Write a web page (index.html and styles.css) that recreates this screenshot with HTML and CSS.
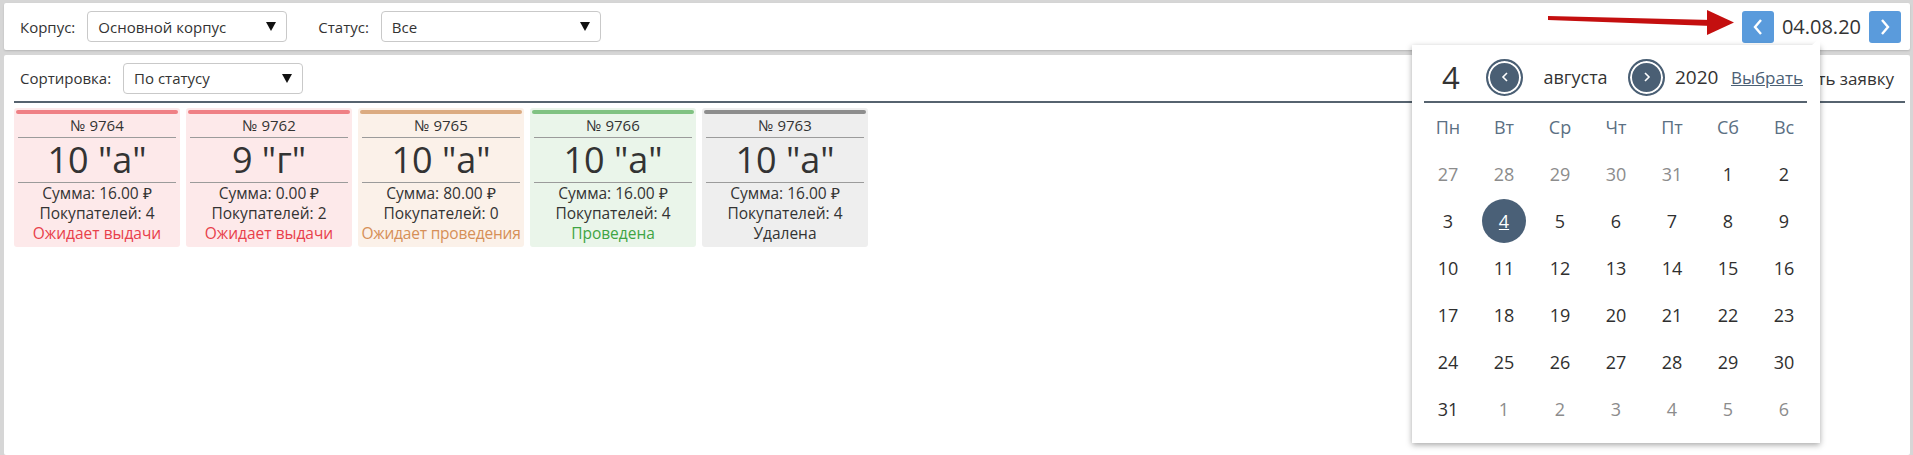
FILE: index.html
```html
<!DOCTYPE html>
<html lang="ru">

<head>
    <meta charset="UTF-8">
    <meta name="viewport" content="width=device-width, initial-scale=1.0">
    <title>Заявки</title>
    <link rel="stylesheet" href="styles.css">
</head>

<body>
    <div class="page">
        <div class="toolbar">
            <span class="label">Корпус:</span>
            <div class="select select-building">Основной корпус <span class="caret"></span></div>
            <span class="label">Статус:</span>
            <div class="select select-status">Все <span class="caret"></span></div>

            <div class="date-nav">
                <button class="nav-btn">
                    <svg width="12" height="18" viewBox="0 0 12 18"><polyline points="9,2 3,9 9,16" fill="none" stroke="#fff" stroke-width="2.4" /></svg>
                </button>
                <span class="date-text">04.08.20</span>
                <button class="nav-btn">
                    <svg width="12" height="18" viewBox="0 0 12 18"><polyline points="3,2 9,9 3,16" fill="none" stroke="#fff" stroke-width="2.4" /></svg>
                </button>
            </div>
        </div>

        <div class="panel">
            <div class="panel-head">
                <span class="label">Сортировка:</span>
                <div class="select select-sort">По статусу <span class="caret"></span></div>
                <a class="create-link">Создать заявку</a>
            </div>

            <div class="cards">
                <div class="card card-wait">
                    <div class="card-bar"></div>
                    <div class="card-num">№ 9764</div>
                    <div class="card-class">10 "а"</div>
                    <div class="card-info">Сумма: 16.00 ₽</div>
                    <div class="card-info">Покупателей: 4</div>
                    <div class="card-info card-status">Ожидает выдачи</div>
                </div>
                <div class="card card-wait">
                    <div class="card-bar"></div>
                    <div class="card-num">№ 9762</div>
                    <div class="card-class">9 "г"</div>
                    <div class="card-info">Сумма: 0.00 ₽</div>
                    <div class="card-info">Покупателей: 2</div>
                    <div class="card-info card-status">Ожидает выдачи</div>
                </div>
                <div class="card card-pending">
                    <div class="card-bar"></div>
                    <div class="card-num">№ 9765</div>
                    <div class="card-class">10 "а"</div>
                    <div class="card-info">Сумма: 80.00 ₽</div>
                    <div class="card-info">Покупателей: 0</div>
                    <div class="card-info card-status">Ожидает проведения</div>
                </div>
                <div class="card card-done">
                    <div class="card-bar"></div>
                    <div class="card-num">№ 9766</div>
                    <div class="card-class">10 "а"</div>
                    <div class="card-info">Сумма: 16.00 ₽</div>
                    <div class="card-info">Покупателей: 4</div>
                    <div class="card-info card-status">Проведена</div>
                </div>
                <div class="card card-deleted">
                    <div class="card-bar"></div>
                    <div class="card-num">№ 9763</div>
                    <div class="card-class">10 "а"</div>
                    <div class="card-info">Сумма: 16.00 ₽</div>
                    <div class="card-info">Покупателей: 4</div>
                    <div class="card-info card-status">Удалена</div>
                </div>
            </div>
        </div>
    </div>

    <!-- pointer arrow drawn over the toolbar -->
    <svg class="hint-arrow" width="200" height="34" viewBox="0 0 200 34">
        <polygon points="8,10 172,14 172,20 8,14" fill="#c40f0f" />
        <polygon points="167,4 194,16.5 167,29" fill="#c40f0f" />
    </svg>

    <div class="date-popup">
        <div class="popup-head">
            <span class="popup-day">4</span>
            <span class="round-btn">
                <svg width="10" height="12" viewBox="0 0 10 12"><polyline points="7,2 3,6 7,10" fill="none" stroke="#fff" stroke-width="1.6" /></svg>
            </span>
            <span class="popup-month">августа</span>
            <span class="round-btn">
                <svg width="10" height="12" viewBox="0 0 10 12"><polyline points="3,2 7,6 3,10" fill="none" stroke="#fff" stroke-width="1.6" /></svg>
            </span>
            <span class="popup-year">2020 <a class="pick-link">Выбрать</a></span>
        </div>
        <div class="cal-grid">
            <span class="wd">Пн</span><span class="wd">Вт</span><span class="wd">Ср</span><span class="wd">Чт</span><span class="wd">Пт</span><span class="wd">Сб</span><span class="wd">Вс</span>

            <span class="day other">27</span><span class="day other">28</span><span class="day other">29</span><span class="day other">30</span><span class="day other">31</span><span class="day">1</span><span class="day">2</span>
            <span class="day">3</span><span class="day selected"><b>4</b></span><span class="day">5</span><span class="day">6</span><span class="day">7</span><span class="day">8</span><span class="day">9</span>
            <span class="day">10</span><span class="day">11</span><span class="day">12</span><span class="day">13</span><span class="day">14</span><span class="day">15</span><span class="day">16</span>
            <span class="day">17</span><span class="day">18</span><span class="day">19</span><span class="day">20</span><span class="day">21</span><span class="day">22</span><span class="day">23</span>
            <span class="day">24</span><span class="day">25</span><span class="day">26</span><span class="day">27</span><span class="day">28</span><span class="day">29</span><span class="day">30</span>
            <span class="day">31</span><span class="day other">1</span><span class="day other">2</span><span class="day other">3</span><span class="day other">4</span><span class="day other">5</span><span class="day other">6</span>
        </div>
    </div>
</body>

</html>
```

FILE: styles.css
```css
body {
    margin: 0;
    height: 455px;
    overflow: hidden;
    background-color: #d6d6d6;
    font-family: "Open Sans", sans-serif;
    font-size: 15px;
    color: #333;
}

.page {
    display: flex;
    flex-direction: column;
    gap: 5px;
    height: 452px;
    padding: 3px 3px 0 4px;
}

.toolbar {
    display: flex;
    align-items: center;
    height: 47px;
    padding: 0 9px 0 16px;
    background: #fff;
    border-radius: 2px;
    box-shadow: 0 1px 2px rgba(0, 0, 0, 0.15);
}

.label {
    margin-right: 12px;
}

.select {
    display: flex;
    align-items: center;
    justify-content: space-between;
    box-sizing: border-box;
    height: 31px;
    padding: 0 10px;
    background: #fff;
    border: 1px solid #c9c9c9;
    border-radius: 4px;
}

.caret {
    width: 0;
    height: 0;
    border-left: 5px solid transparent;
    border-right: 5px solid transparent;
    border-top: 9px solid #111;
}

.select-building {
    width: 200px;
    margin-right: 31px;
}

.select-status {
    width: 220px;
}

.select-sort {
    width: 180px;
}

.date-nav {
    display: flex;
    align-items: center;
    gap: 8px;
    margin-left: auto;
}

.nav-btn {
    display: flex;
    align-items: center;
    justify-content: center;
    width: 32px;
    height: 32px;
    padding: 0;
    background-color: #5a9bdc;
    border: none;
    border-radius: 3px;
}

.date-text {
    font-size: 20px;
    color: #333;
}

.hint-arrow {
    position: absolute;
    left: 1540px;
    top: 6px;
}

/* main panel */
.panel {
    flex: 1;
    padding: 0 5px 0 10px;
    background: #fff;
    border-radius: 2px;
}

.panel-head {
    display: flex;
    align-items: center;
    height: 46px;
    padding-left: 6px;
    border-bottom: 2px solid #56636f;
}

.create-link {
    margin-left: auto;
    margin-right: 11px;
    font-size: 17px;
    color: #333;
}

.cards {
    display: flex;
    gap: 6px;
    padding-top: 5px;
}

.card {
    box-sizing: border-box;
    width: 166px;
    height: 139px;
    padding: 2px 2px 3px;
    border-radius: 3px;
    text-align: center;
}

.card-bar {
    height: 4px;
    border-radius: 2px;
}

.card-num {
    height: 23px;
    line-height: 22px;
    margin: 0 2px;
    border-bottom: 1px solid #9b9b9b;
}

.card-class {
    height: 44px;
    line-height: 44px;
    margin: 0 2px;
    font-size: 36px;
    border-bottom: 1px solid #9b9b9b;
}

.card-info {
    font-size: 15.5px;
    line-height: 20px;
    white-space: nowrap;
}

.card-wait {
    background-color: #fde9ea;
}

.card-wait .card-bar {
    background-color: #ef8085;
}

.card-wait .card-status {
    color: #e8404b;
}

.card-pending {
    background-color: #fbf1e9;
}

.card-pending .card-bar {
    background-color: #dbab81;
}

.card-pending .card-status {
    color: #d68f57;
    letter-spacing: -0.2px;
}

.card-done {
    background-color: #eaf5ea;
}

.card-done .card-bar {
    background-color: #80c282;
}

.card-done .card-status {
    color: #3fa443;
}

.card-deleted {
    background-color: #eeeeee;
}

.card-deleted .card-bar {
    background-color: #8d8d8d;
}

/* date picker */
.date-popup {
    position: absolute;
    left: 1412px;
    top: 45px;
    width: 408px;
    height: 398px;
    box-sizing: border-box;
    background: #fff;
    box-shadow: 0 2px 6px rgba(0, 0, 0, 0.35);
}

.date-popup::before {
    content: "";
    position: absolute;
    right: 0;
    top: -7px;
    width: 8px;
    height: 7px;
    background: #fff;
    clip-path: polygon(0 100%, 100% 0, 100% 100%);
}

.popup-head {
    display: grid;
    grid-template-columns: 62px 37px 105px 37px 1fr;
    align-items: center;
    height: 48px;
    margin: 0 13px 0 12px;
    padding-top: 8px;
    border-bottom: 2px solid #56636f;
}

.popup-day {
    padding-left: 18px;
    font-size: 31px;
}

.round-btn {
    display: flex;
    align-items: center;
    justify-content: center;
    box-sizing: border-box;
    width: 37px;
    height: 37px;
    background-color: #4a5f74;
    border: 2px solid #4a5f74;
    border-radius: 50%;
    box-shadow: inset 0 0 0 2px #fff;
}

.popup-month {
    text-align: center;
    font-size: 18px;
}

.popup-year {
    display: flex;
    align-items: center;
    justify-content: space-between;
    padding: 0 4px 0 10px;
    font-size: 19px;
}

.pick-link {
    font-size: 17px;
    color: #4b6075;
    text-decoration: underline;
}

.cal-grid {
    display: grid;
    grid-template-columns: repeat(7, 56px);
    grid-auto-rows: 47px;
    margin: 0 8px;
}

.wd,
.day {
    display: flex;
    align-items: center;
    justify-content: center;
    font-size: 18px;
}

.wd {
    color: #5b7083;
}

.day {
    color: #2f2f2f;
}

.day.other {
    color: #8c8c8c;
}

.day.selected b {
    display: flex;
    align-items: center;
    justify-content: center;
    width: 44px;
    height: 44px;
    font-weight: normal;
    color: #fff;
    text-decoration: underline;
    background-color: #4a6077;
    border-radius: 50%;
}
```
